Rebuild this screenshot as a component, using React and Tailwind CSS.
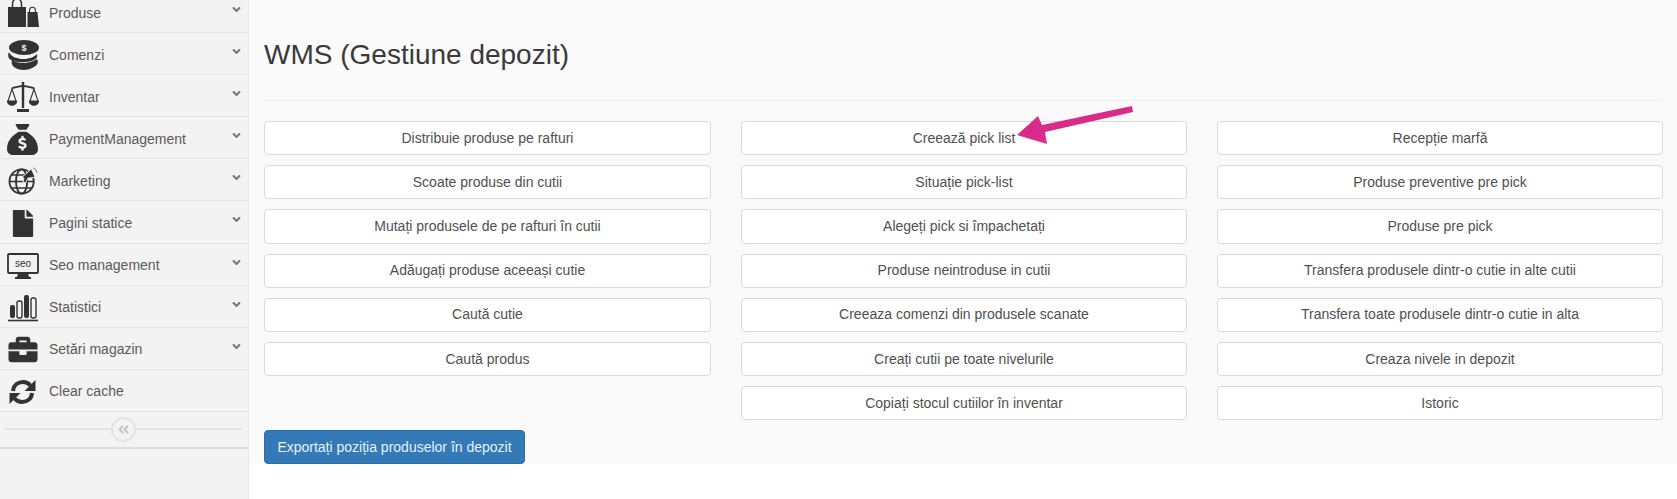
import { FaAngleDoubleLeft, FaAngleDown, FaBriefcase, FaFile } from 'react-icons/fa';
import { FaSackDollar } from 'react-icons/fa6';

function BagsIcon() {
    return (
        <svg viewBox="0 0 32 30" className="h-[30px] w-[32px]" fill="#333">
            <path d="M1 9h18v20H1z" />
            <path d="M20.500 14h10l1.500 15H20.500z" />
            <path d="M5.500 12V6c0-7 9-7 9 0v6" fill="none" stroke="#333" strokeWidth="1.500" />
            <path d="M22.500 17v-4c0-5 6-5 6 0v4" fill="none" stroke="#333" strokeWidth="1.200" />
        </svg>
    );
}

function CoinsIcon() {
    return (
        <svg viewBox="0 0 32 30" className="h-[30px] w-[32px]" fill="#333">
            <ellipse cx="17" cy="7.500" rx="15" ry="7.500" />
            <path d="M2 12c2 5 9 7 14 7s12-2 14-5c1 3-1 5-3 6-7 3-17 3-23 0-2-1-4-4-2-8z" />
            <path d="M5 20c6 4 17 4 25-1 2 4 0 6-3 8-6 4-15 4-20 0-2-2-3-4-2-7z" />
            <text x="17" y="11" fontSize="9" fontWeight="700" fill="#f3f3f3" textAnchor="middle" fontFamily="Liberation Sans">$</text>
        </svg>
    );
}

function ScaleIcon() {
    return (
        <svg viewBox="0 0 32 30" className="h-[30px] w-[32px]" fill="#333">
            <path d="M14.800 0h2.400v26h-2.400z" />
            <path d="M10 27h12v3H10z" />
            <path d="M4.500 6.500C10 5 12 4 16 4s6 1 11.500 2.500" fill="none" stroke="#333" strokeWidth="1.800" />
            <path d="M5 7l-4 12M5 7l4 12M27 7l-4 12M27 7l4 12" fill="none" stroke="#333" strokeWidth="1.100" />
            <path d="M0 18.500h10c1 7-11 7-10 0zM22 18.500h10c1 7-11 7-10 0z" />
        </svg>
    );
}

function GlobeIcon() {
    return (
        <svg viewBox="0 0 32 30" className="h-[28px] w-[30px]" fill="none" stroke="#333" strokeWidth="2">
            <circle cx="14.500" cy="15.500" r="13" />
            <ellipse cx="14.500" cy="15.500" rx="6" ry="13" />
            <path d="M1.500 15.500h26M3.500 8.500h22M3.500 22.500h22" strokeWidth="1.600" />
            <path d="M15 11l10-9 4 9-8 1-2 5-3-1 1-4z" fill="#333" stroke="#f3f3f3" strokeWidth="1" />
            <path d="M27 1c2 1 3 2 4 5" strokeWidth="0.800" />
        </svg>
    );
}

function SeoIcon() {
    return (
        <svg viewBox="0 0 32 26" className="h-[26px] w-[32px]">
            <rect x="1" y="1" width="30" height="19" rx="1" fill="none" stroke="#333" strokeWidth="1.800" />
            <path d="M11 20h10l1 4h2v2H8v-2h2z" fill="#333" />
            <text x="16" y="14" fontSize="10" fill="#333" textAnchor="middle" fontFamily="Liberation Sans">seo</text>
        </svg>
    );
}

function StatsIcon() {
    return (
        <svg viewBox="0 0 32 28" className="h-[28px] w-[32px]">
            <rect x="3" y="11" width="5" height="13" rx="2" fill="#333" />
            <rect x="10" y="7" width="5" height="17" rx="2" fill="none" stroke="#333" strokeWidth="1.400" />
            <rect x="17" y="1" width="5" height="23" rx="2" fill="#333" />
            <rect x="24" y="4" width="5" height="20" rx="2" fill="none" stroke="#333" strokeWidth="1.400" />
            <path d="M1 26.500h30" stroke="#333" strokeWidth="1.600" />
        </svg>
    );
}

function RefreshIcon() {
    return (
        <svg viewBox="0 0 27 26" className="h-[26px] w-[27px]" fill="#333">
            <path d="M4 12C4.500 6 9 3 14 3c3 0 5.500 1.200 7.500 3.500" fill="none" stroke="#333" strokeWidth="4" />
            <path d="M26.500 1v11h-11z" />
            <path d="M23 14c-.5 6-5 9-10 9-3 0-5.500-1.200-7.500-3.500" fill="none" stroke="#333" strokeWidth="4" />
            <path d="M.5 25V14h11z" />
        </svg>
    );
}

const sidebarItems = [
    { label: 'Produse', icon: <BagsIcon /> },
    { label: 'Comenzi', icon: <CoinsIcon /> },
    { label: 'Inventar', icon: <ScaleIcon /> },
    { label: 'PaymentManagement', icon: <FaSackDollar className="h-[31px] w-[31px] text-[#333]" /> },
    { label: 'Marketing', icon: <GlobeIcon /> },
    { label: 'Pagini statice', icon: <FaFile className="h-[27px] w-[22px] text-[#333]" /> },
    { label: 'Seo management', icon: <SeoIcon /> },
    { label: 'Statistici', icon: <StatsIcon /> },
    { label: 'Setări magazin', icon: <FaBriefcase className="h-[29px] w-[32px] text-[#333]" /> },
    { label: 'Clear cache', icon: <RefreshIcon />, noArrow: true },
];

const columns = [
    [
        'Distribuie produse pe rafturi',
        'Scoate produse din cutii',
        'Mutați produsele de pe rafturi în cutii',
        'Adăugați produse aceeași cutie',
        'Caută cutie',
        'Caută produs',
    ],
    [
        'Creează pick list',
        'Situație pick-list',
        'Alegeți pick si împachetați',
        'Produse neintroduse in cutii',
        'Creeaza comenzi din produsele scanate',
        'Creați cutii pe toate nivelurile',
        'Copiați stocul cutiilor în inventar',
    ],
    [
        'Recepție marfă',
        'Produse preventive pre pick',
        'Produse pre pick',
        'Transfera produsele dintr-o cutie in alte cutii',
        'Transfera toate produsele dintr-o cutie in alta',
        'Creaza nivele in depozit',
        'Istoric',
    ],
];

function SidebarRow({ item }) {
    return (
        <div className="relative flex h-[42.100px] items-center border-b border-[#e6e6e6] pt-[3px]">
            <div className="flex w-[49px] shrink-0 justify-center pr-[4px]">{item.icon}</div>
            <span className="text-[14px] text-[#5a5a5a]">{item.label}</span>
            {!item.noArrow && (
                <FaAngleDown className="absolute right-[5px] top-[12px] h-[13px] w-[13px] text-[#777]" />
            )}
        </div>
    );
}

function Sidebar() {
    return (
        <aside className="h-[520px] w-[249px] shrink-0 -translate-y-[9px] border-r border-[#e7e7e7] bg-[#f3f3f3]">
            {sidebarItems.map((item) => (
                <SidebarRow key={item.label} item={item} />
            ))}
            <div className="flex h-[37px] items-center border-b-2 border-[#ddd] pl-[5px] pr-[6px]">
                <div className="h-[2px] flex-1 bg-[#e3e3e3]" />
                <div className="flex h-[25px] w-[25px] items-center justify-center rounded-full border-2 border-[#e3e3e3] bg-[#f3f3f3]">
                    <FaAngleDoubleLeft className="h-[13px] w-[13px] text-[#c4c4c4]" />
                </div>
                <div className="h-[2px] flex-1 bg-[#e3e3e3]" />
            </div>
        </aside>
    );
}

function ActionButton({ label }) {
    return (
        <button className="h-[34.200px] w-full rounded-[4px] border border-[#d9d9d9] bg-white text-[14px] text-[#505050]">
            {label}
        </button>
    );
}

function PickListArrow() {
    return (
        <svg className="absolute left-[1015px] top-[102px] h-[44px] w-[120px]" viewBox="0 0 120 44" fill="#d92c8a">
            <path d="M2 33L23 14l4 9 90-19 1 6-88 20 2 12z" />
        </svg>
    );
}

export default function App() {
    return (
        <div className="relative flex h-[499px] w-full overflow-hidden bg-white font-['Liberation_Sans',Arial,sans-serif]">
            <Sidebar />
            <main className="h-[463px] flex-1 bg-[#fafafa] pl-[15px]">
                <h1 className="mt-[38px] text-[28px] leading-[33px] text-[#3a3a3a]">WMS (Gestiune depozit)</h1>
                <hr className="mt-[29px] mr-[14px] border-[#f0f0f0]" />
                <div className="mt-[20px] grid grid-cols-[447px_446px_446px] gap-x-[30px]">
                    {columns.map((col, i) => (
                        <div key={i} className="flex flex-col gap-[10px]">
                            {col.map((label) => (
                                <ActionButton key={label} label={label} />
                            ))}
                        </div>
                    ))}
                </div>
                <button className="mt-[10px] h-[34px] w-[261px] rounded-[4px] border border-[#2e6da4] bg-[#337ab7] text-[14px] text-[#e8f0f7]">
                    Exportați poziția produselor în depozit
                </button>
            </main>
            <PickListArrow />
        </div>
    );
}
